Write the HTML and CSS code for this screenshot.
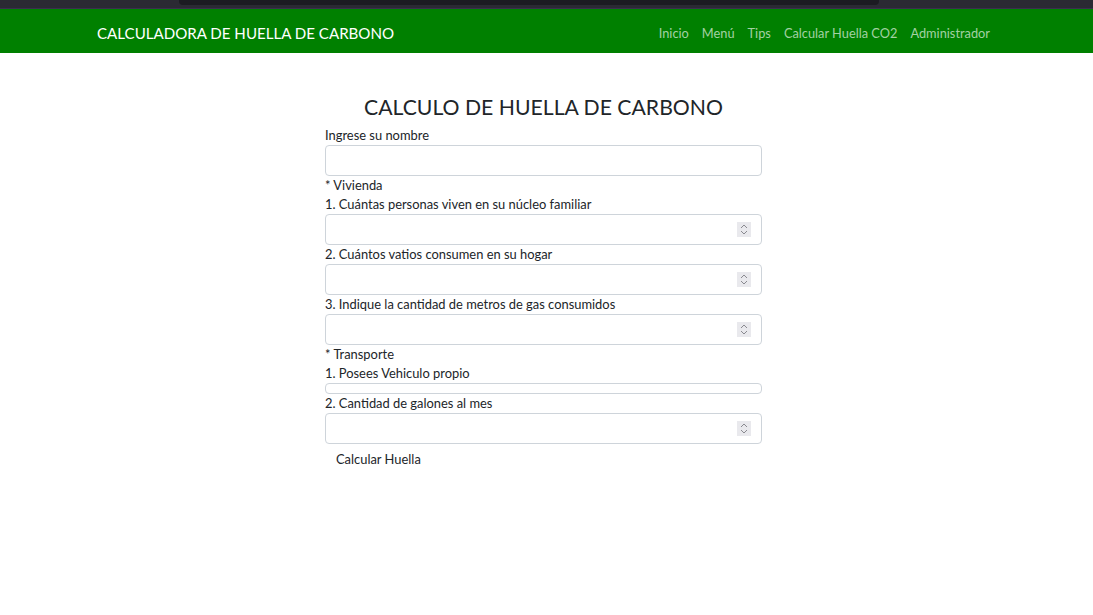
FILE: index.html
```html
<!DOCTYPE html>
<html lang="es">
<head>
<meta charset="utf-8">
<title>Calculadora de Huella de Carbono</title>
<link rel="stylesheet" href="styles.css">
</head>
<body>
<div class="chrome"><div class="chrome-tab"></div></div>
<nav class="navbar">
  <div class="nav-inner">
    <a class="brand" href="#">CALCULADORA DE HUELLA DE CARBONO</a>
    <ul class="nav-links">
      <li><a href="#">Inicio</a></li>
      <li><a href="#">Menú</a></li>
      <li><a href="#">Tips</a></li>
      <li><a href="#">Calcular Huella CO2</a></li>
      <li><a href="#">Administrador</a></li>
    </ul>
  </div>
</nav>
<main class="main">
  <form class="calc-form">
    <h1 class="title">CALCULO DE HUELLA DE CARBONO</h1>
    <label class="lbl">Ingrese su nombre</label>
    <div class="field"><input class="inp" type="text"></div>
    <div class="lbl">* Vivienda</div>
    <label class="lbl">1. Cuántas personas viven en su núcleo familiar</label>
    <div class="field"><input class="inp" type="text"><span class="spin"><svg width="8" height="11" viewBox="0 0 8 11"><path d="M1 4 L4 1 L7 4 M1 7 L4 10 L7 7" fill="none" stroke="#8a8a90" stroke-width="1"/></svg></span></div>
    <label class="lbl">2. Cuántos vatios consumen en su hogar</label>
    <div class="field"><input class="inp" type="text"><span class="spin"><svg width="8" height="11" viewBox="0 0 8 11"><path d="M1 4 L4 1 L7 4 M1 7 L4 10 L7 7" fill="none" stroke="#8a8a90" stroke-width="1"/></svg></span></div>
    <label class="lbl">3. Indique la cantidad de metros de gas consumidos</label>
    <div class="field"><input class="inp" type="text"><span class="spin"><svg width="8" height="11" viewBox="0 0 8 11"><path d="M1 4 L4 1 L7 4 M1 7 L4 10 L7 7" fill="none" stroke="#8a8a90" stroke-width="1"/></svg></span></div>
    <div class="lbl">* Transporte</div>
    <label class="lbl">1. Posees Vehiculo propio</label>
    <div class="field field-slim"></div>
    <label class="lbl">2. Cantidad de galones al mes</label>
    <div class="field"><input class="inp" type="text"><span class="spin"><svg width="8" height="11" viewBox="0 0 8 11"><path d="M1 4 L4 1 L7 4 M1 7 L4 10 L7 7" fill="none" stroke="#8a8a90" stroke-width="1"/></svg></span></div>
    <div class="actions"><button class="btn" type="button">Calcular Huella</button></div>
  </form>
</main>
</body>
</html>
```
FILE: styles.css
```css
* { box-sizing: border-box; }
html, body { margin: 0; padding: 0; background: #fff; }
body {
  font-family: Lato, "Noto Sans", sans-serif;
  color: #212529;
  font-size: 13px;
}
.chrome {
  height: 9px;
  background: #2b2a33;
  border-bottom: 1px solid #3b2f4f;
  display: flex;
  padding-left: 179px;
}
.chrome-tab {
  width: 700px;
  height: 5px;
  background: #1c1b22;
  border-radius: 0 0 4px 4px;
}
.navbar {
  background: #008000;
  height: 44px;
  padding-top: 4px;
  display: flex;
  align-items: center;
}
.nav-inner {
  width: 100%;
  padding: 0 103px 0 97px;
  display: flex;
  align-items: center;
  justify-content: space-between;
}
.brand {
  color: #fff;
  text-decoration: none;
  font-size: 15.1px;
}
.nav-links {
  list-style: none;
  margin: 0;
  padding: 0;
  display: flex;
  gap: 13px;
}
.nav-links a {
  color: #a3d1a3;
  text-decoration: none;
  font-size: 12.8px;
}
.main {
  display: flex;
  justify-content: center;
  padding-top: 37px;
  padding-right: 6px;
}
.calc-form {
  width: 437px;
  display: flex;
  flex-direction: column;
}
.title {
  margin: 0 0 1px;
  font-weight: 400;
  font-size: 21.2px;
  line-height: 35px;
  text-align: center;
  color: #212529;
}
.lbl {
  display: block;
  font-size: 12.9px;
  line-height: 19px;
  color: #212529;
}
.field {
  height: 31px;
  border: 1px solid #ced4da;
  border-radius: 4px;
  display: flex;
  align-items: center;
  background: #fff;
}
.field-slim { height: 11px; }
.inp {
  flex: 1;
  min-width: 0;
  height: 100%;
  border: 0;
  outline: none;
  background: transparent;
  font: inherit;
  padding: 0 12px;
}
.spin {
  width: 14px;
  height: 15px;
  margin-right: 10px;
  background: #e9e9ed;
  display: flex;
  align-items: center;
  justify-content: center;
}
.actions { display: flex; }
.btn {
  font: inherit;
  font-size: 12.9px;
  line-height: 19px;
  color: #212529;
  background: transparent;
  border: 0;
  padding: 6px 11px;
  cursor: pointer;
}
```
